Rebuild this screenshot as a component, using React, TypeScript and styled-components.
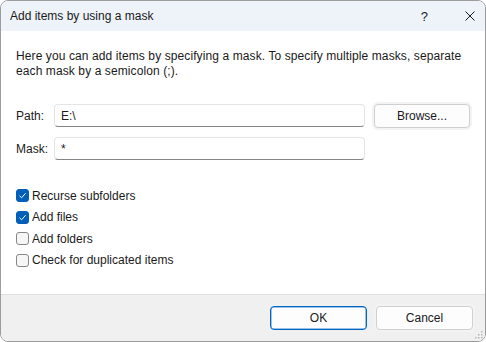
import React from 'react'
import styled, { createGlobalStyle } from 'styled-components'

const GlobalStyle = createGlobalStyle`
  html, body {
    margin: 0;
    padding: 0;
    background: #ffffff;
  }
  * {
    box-sizing: border-box;
  }
`

const font = `'Liberation Sans', Arial, sans-serif`

const Window = styled.div`
  position: relative;
  width: 486px;
  height: 342px;
  display: flex;
  flex-direction: column;
  border: 1px solid #9c9c9c;
  border-radius: 8px;
  overflow: hidden;
  background: #ffffff;
  font-family: ${font};
  font-size: 12px;
  color: #1a1a1a;
`

const TitleBar = styled.div`
  height: 30px;
  flex: none;
  display: flex;
  align-items: center;
  justify-content: space-between;
  padding: 0 10px 0 9px;
  background: #eef3fa;
`

const Title = styled.span`
  font-size: 12px;
  color: #1a1a1a;
`

const TitleActions = styled.div`
  display: flex;
  align-items: center;
  gap: 37px;
`

const HelpGlyph = styled.span`
  font-size: 13px;
  color: #1a1a1a;
`

const CloseGlyph = styled.svg`
  display: block;
  width: 10px;
  height: 10px;
`

const Body = styled.div`
  flex: 1;
  padding: 18px 15px 0;
  background: #ffffff;
`

const Description = styled.p`
  margin: 0;
  line-height: 15px;
  letter-spacing: 0.1px;
`

const Form = styled.div`
  display: grid;
  grid-template-columns: 29px 311px 96px;
  grid-auto-rows: 24px;
  column-gap: 9px;
  row-gap: 9px;
  margin-top: 25px;
`

const FieldLabel = styled.label`
  align-self: center;
  white-space: nowrap;
`

const TextInput = styled.input`
  width: 100%;
  height: 23px;
  margin: 0;
  padding: 0 6px;
  border: 1px solid #e5e5e5;
  border-bottom-color: #858585;
  border-radius: 4px;
  background: #ffffff;
  font-family: ${font};
  font-size: 12px;
  color: #1a1a1a;
  outline: none;
`

const Button = styled.button<{ $primary?: boolean; $width?: number }>`
  width: ${({ $width }) => $width ?? 96}px;
  height: 24px;
  margin: 0;
  padding: 0;
  border: 1px solid ${({ $primary }) => ($primary ? '#0067c0' : '#d0d0d0')};
  border-radius: 4px;
  background: #fdfdfd;
  font-family: ${font};
  font-size: 12px;
  color: #1a1a1a;
  box-shadow: ${({ $primary }) => ($primary ? 'inset 0 0 0 0.5px #3b8ad8' : '0 0 0 2px #f3f3f3')};
`

const Options = styled.div`
  display: flex;
  flex-direction: column;
  margin-top: 24px;
`

const CheckRow = styled.label`
  display: flex;
  align-items: center;
  height: 21.5px;
  gap: 3px;
`

const CheckBox = styled.span<{ $checked?: boolean }>`
  width: 13px;
  height: 13px;
  flex: none;
  display: flex;
  align-items: center;
  justify-content: center;
  border-radius: 3px;
  border: 1px solid ${({ $checked }) => ($checked ? '#005fb8' : '#878787')};
  background: ${({ $checked }) => ($checked ? '#005fb8' : '#f6f6f6')};
`

const Footer = styled.div`
  height: 47px;
  flex: none;
  display: flex;
  align-items: center;
  justify-content: flex-end;
  gap: 9px;
  padding: 0 12px 0 0;
  background: #f0f0f0;
  border-top: 1px solid #e0e0e0;
`

const Grip = styled.svg`
  position: absolute;
  right: 2px;
  bottom: 2px;
  width: 8px;
  height: 8px;
`

const options = [
  { label: 'Recurse subfolders', checked: true },
  { label: 'Add files', checked: true },
  { label: 'Add folders', checked: false },
  { label: 'Check for duplicated items', checked: false },
]

const CheckMark = () => (
  <svg width="9" height="9" viewBox="0 0 9 9">
    <path d="M1.5 4.8 L3.6 6.8 L7.6 2.2" fill="none" stroke="#ffffff" strokeWidth="1" />
  </svg>
)

const App: React.FC = () => {
  return (
    <>
      <GlobalStyle />
      <Window>
        <TitleBar>
          <Title>Add items by using a mask</Title>
          <TitleActions>
            <HelpGlyph>?</HelpGlyph>
            <CloseGlyph viewBox="0 0 10 10">
              <path d="M0.5 0.5 L9.5 9.5 M9.5 0.5 L0.5 9.5" stroke="#1a1a1a" strokeWidth="1" />
            </CloseGlyph>
          </TitleActions>
        </TitleBar>
        <Body>
          <Description>
            Here you can add items by specifying a mask. To specify multiple masks, separate each mask by a
            semicolon (;).
          </Description>
          <Form>
            <FieldLabel>Path:</FieldLabel>
            <TextInput defaultValue="E:\" />
            <Button>Browse...</Button>
            <FieldLabel>Mask:</FieldLabel>
            <TextInput defaultValue="*" />
          </Form>
          <Options>
            {options.map((option) => (
              <CheckRow key={option.label}>
                <CheckBox $checked={option.checked}>{option.checked && <CheckMark />}</CheckBox>
                {option.label}
              </CheckRow>
            ))}
          </Options>
        </Body>
        <Footer>
          <Button $primary $width={97}>OK</Button>
          <Button $width={97}>Cancel</Button>
        </Footer>
        <Grip viewBox="0 0 8 8">
          {[
            [6, 0],
            [6, 3],
            [3, 3],
            [6, 6],
            [3, 6],
            [0, 6],
          ].map(([x, y]) => (
            <rect key={`${x}-${y}`} x={x} y={y} width="1.5" height="1.5" fill="#b5b5b5" />
          ))}
        </Grip>
      </Window>
    </>
  )
}

export default App
